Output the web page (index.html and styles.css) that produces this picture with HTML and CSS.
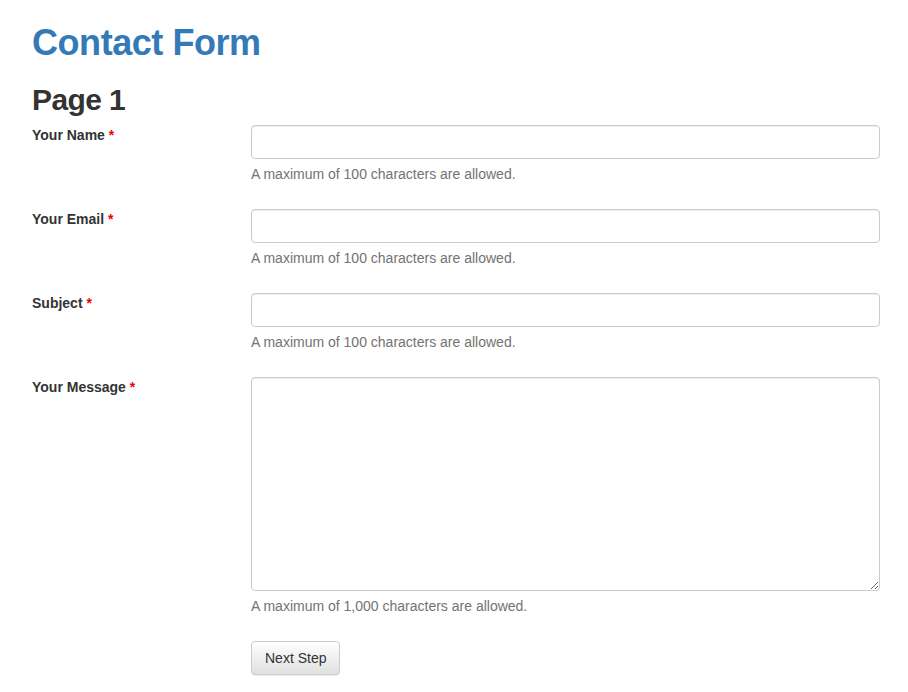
FILE: index.html
```html
<!DOCTYPE html>
<html lang="en">
<head>
<meta charset="utf-8">
<title>Contact Form</title>
<link rel="stylesheet" href="styles.css">
</head>
<body>
<div class="page">
  <h1 class="title">Contact Form</h1>
  <h2 class="page-title">Page 1</h2>
  <form class="form">
    <div class="group">
      <label class="label" for="name">Your Name <span class="req">*</span></label>
      <div class="control">
        <input class="input" id="name" type="text">
        <p class="help">A maximum of 100 characters are allowed.</p>
      </div>
    </div>
    <div class="group">
      <label class="label" for="email">Your Email <span class="req">*</span></label>
      <div class="control">
        <input class="input" id="email" type="text">
        <p class="help">A maximum of 100 characters are allowed.</p>
      </div>
    </div>
    <div class="group">
      <label class="label" for="subject">Subject <span class="req">*</span></label>
      <div class="control">
        <input class="input" id="subject" type="text">
        <p class="help">A maximum of 100 characters are allowed.</p>
      </div>
    </div>
    <div class="group">
      <label class="label" for="message">Your Message <span class="req">*</span></label>
      <div class="control">
        <textarea class="input textarea" id="message"></textarea>
        <p class="help">A maximum of 1,000 characters are allowed.</p>
      </div>
    </div>
    <div class="group">
      <div></div>
      <div class="control">
        <button class="btn" type="button">Next Step</button>
      </div>
    </div>
  </form>
</div>
</body>
</html>
```

FILE: styles.css
```css
* { box-sizing: border-box; }
html, body { margin: 0; padding: 0; background: #fff; }
body {
  font-family: "Liberation Sans", Arial, Helvetica, sans-serif;
  font-size: 14px;
  line-height: 20px;
  color: #333;
}
.page {
  padding: 23px 28px 0 32px;
}
.title {
  margin: 0;
  font-size: 36px;
  line-height: 39.6px;
  font-weight: bold;
  letter-spacing: -0.45px;
  color: #337ab7;
}
.page-title {
  margin: 20px 0 9px;
  font-size: 30px;
  line-height: 33px;
  font-weight: bold;
  letter-spacing: -0.6px;
  color: #333;
}
.form { margin: 0; }
.group {
  display: grid;
  grid-template-columns: 219px 1fr;
  margin-bottom: 15px;
}
.label {
  font-weight: bold;
  color: #333;
  padding-right: 15px;
}
.req { color: #e00; }
.control { min-width: 0; }
.input {
  display: block;
  width: 100%;
  height: 34px;
  margin: 0;
  padding: 6px 12px;
  font: inherit;
  color: #555;
  background: #fff;
  border: 1px solid #ccc;
  border-radius: 4px;
  box-shadow: inset 0 1px 1px rgba(0,0,0,.075);
}
.textarea {
  height: 214px;
  resize: vertical;
}
.help {
  margin: 5px 0 10px;
  color: #737373;
}
.btn {
  display: inline-block;
  height: 34px;
  padding: 6px 13px;
  font: inherit;
  color: #333;
  background: linear-gradient(to bottom, #fff 0%, #e0e0e0 100%);
  border: 1px solid #ccc;
  border-radius: 4px;
  box-shadow: inset 0 1px 0 rgba(255,255,255,.15), 0 1px 1px rgba(0,0,0,.075);
  cursor: pointer;
}
```
